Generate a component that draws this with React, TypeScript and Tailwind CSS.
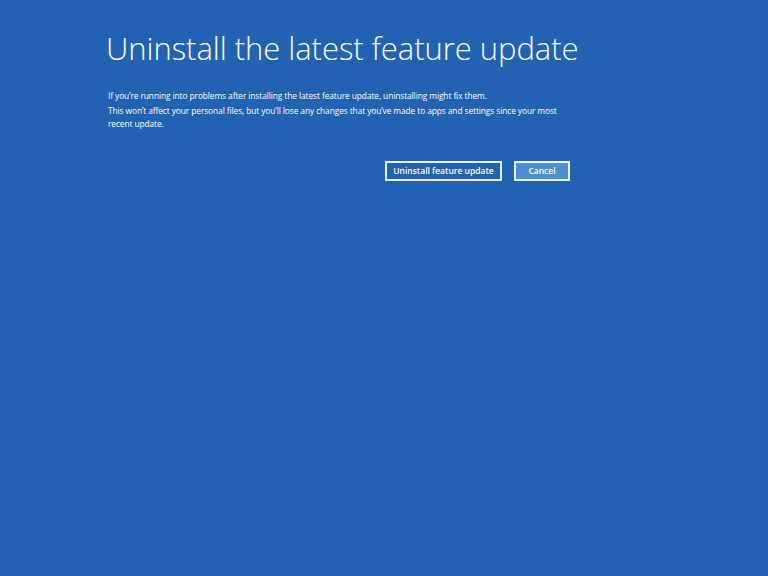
export default function App() {
  return (
    <div className="w-[768px] h-[576px] bg-[#2262b3] text-white" style={{ fontFamily: '"Open Sans", "Noto Sans", sans-serif' }}>
      <div className="pl-[106px] pt-[28px] w-[580px]">
        <h1 className="text-[31px] font-light leading-[40px] whitespace-nowrap tracking-[-0.05px]">Uninstall the latest feature update</h1>
        <div className="mt-[21px] pl-[2px] text-[8.35px] leading-[13px] w-[465px] tracking-[-0.08px]">
          <p>If you’re running into problems after installing the latest feature update, uninstalling might fix them.</p>
          <p className="mt-[2px]">
            This won’t affect your personal files, but you’ll lose any changes that you’ve made to apps and settings since your most recent update.
          </p>
        </div>
        <div className="mt-[31px] flex justify-end gap-[12px] pr-[10px]">
          <button className="h-[20px] w-[117px] border-2 border-white/90 text-[8.5px] font-semibold">Uninstall feature update</button>
          <button className="h-[20px] w-[56px] border-2 border-white/90 bg-[#4b8fd1] text-[8.5px] font-semibold">Cancel</button>
        </div>
      </div>
    </div>
  );
}
